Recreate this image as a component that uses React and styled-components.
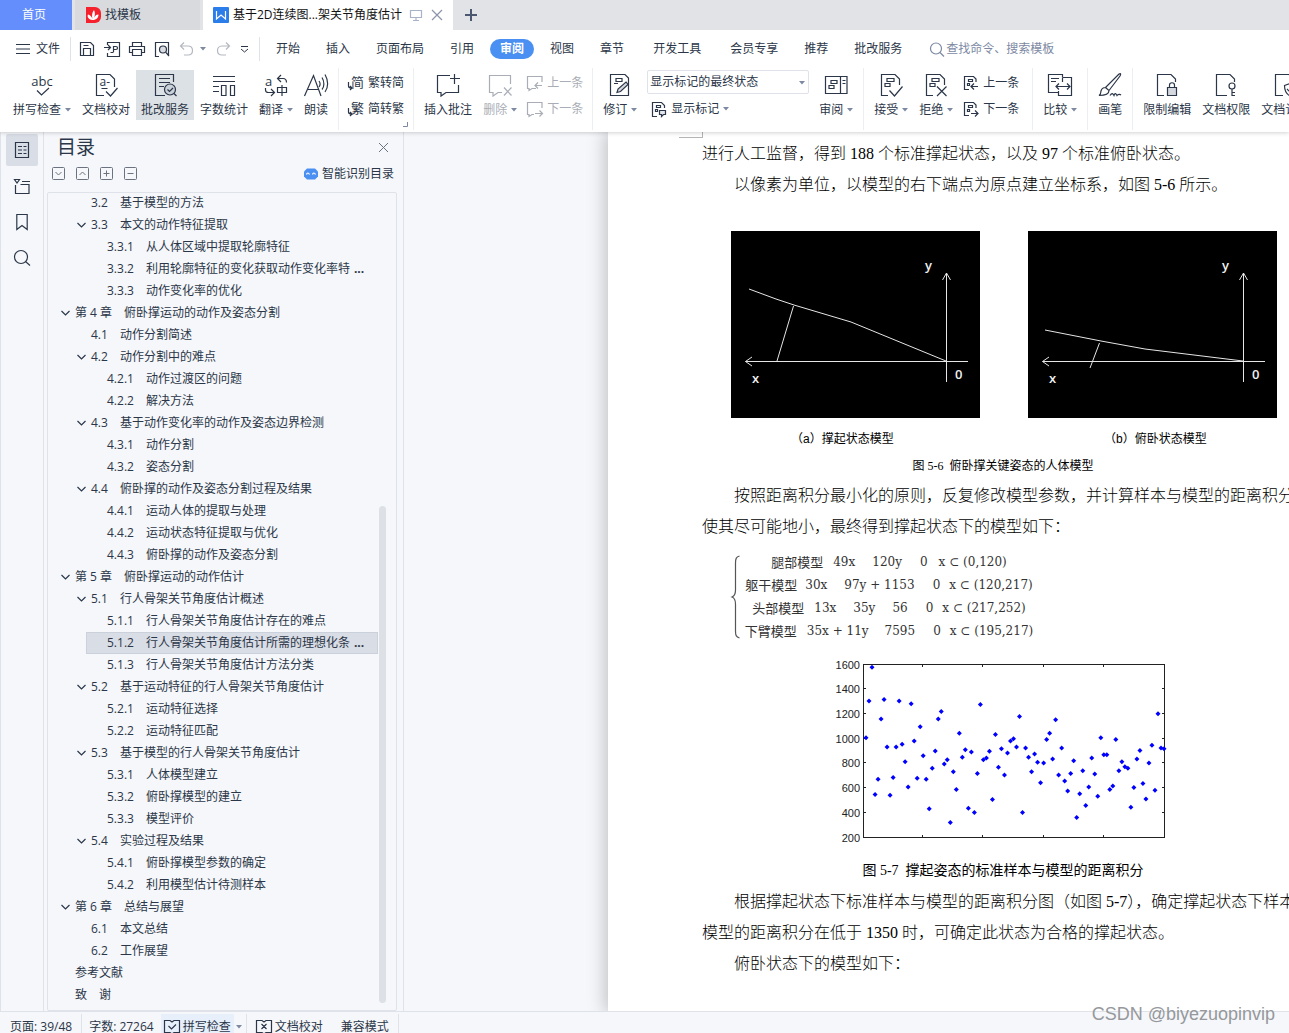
import React from "react";
import styled, { createGlobalStyle, css } from "styled-components";

const ink = "#2b3648";
const muted = "#7d89a3";
const faded = "#a9adb5";
const line = "#dfe2e8";
const panel = "#f5f7fa";

const GlobalStyle = createGlobalStyle`
  * { box-sizing: border-box; }
  body {
    margin: 0;
    overflow: hidden;
    font: 12px/20px "Open Sans", "Noto Sans CJK SC", sans-serif;
    color: ${ink};
    background: #fff;
  }
  button, input, select { font: inherit; color: inherit; }
  button { padding: 0; border: 0; background: none; white-space: nowrap; }
  ul { list-style: none; margin: 0; padding: 0; }
  svg { display: block; flex: none; overflow: visible; }
`;

const Shell = styled.div`
  position: relative;
  display: flex;
  flex-direction: column;
  height: 100vh;
  overflow: hidden;
`;

/* ---------- header ---------- */
const Header = styled.header`
  position: relative;
  z-index: 2;
  flex: none;
  background: #fff;
  box-shadow: 0 1px 4px rgba(0, 0, 0, 0.18);
`;

const TabStrip = styled.div`
  display: flex;
  gap: 3px;
  height: 30px;
  background: #e2e3e7;
`;

const FileTab = styled.button`
  display: flex;
  align-items: center;
  gap: 4px;
  width: ${(p) => p.$width}px;
  height: 30px;
  padding: 0 7px 0 10px;
  background: ${(p) => p.$bg};
  color: ${(p) => p.$color || ink};
`;

const HomeTab = styled(FileTab)`
  justify-content: center;
  padding: 0 14px 0 10px;
`;

const TabTitle = styled.span`
  flex: 1;
  text-align: left;
`;

const NewTab = styled.button`
  padding: 0 9px;
`;

const MenuRow = styled.nav`
  display: flex;
  align-items: center;
  height: 38px;
  padding: 0 16px;
`;

const FileMenu = styled.button`
  display: flex;
  align-items: center;
  gap: 6px;
  padding-right: 10px;
`;

const QuickTools = styled.div`
  display: flex;
  align-items: center;
  gap: 9px;
  height: 24px;
  padding: 0 10px 0 8px;
  border: solid ${line};
  border-width: 0 1px;
`;

const QuickPair = styled.div`
  display: flex;
  align-items: center;
  gap: 5px;
`;

const MenuTabs = styled.div`
  display: flex;
  gap: 9px;
  padding-left: 6px;
`;

const MenuGroup = styled.div`
  display: flex;
  gap: 6px;
`;

const MenuTab = styled.button`
  height: 20px;
  padding: 0 10px;
  border-radius: 10px;
  ${(p) =>
    p.$active &&
    css`
      background: #4a90f2;
      color: #fff;
      font-weight: 700;
    `}
`;

const Search = styled.label`
  display: flex;
  align-items: center;
  gap: 1px;
  padding-left: 18px;
  color: ${muted};
`;

const SearchInput = styled.input`
  width: 130px;
  padding: 0;
  border: 0;
  outline: 0;
  background: none;
  &::placeholder { color: ${muted}; opacity: 1; }
`;

const Ribbon = styled.div`
  display: flex;
  height: 64px;
  padding: 0 0 2px 3px;
  overflow: hidden;
`;

const Group = styled.div`
  position: relative;
  display: flex;
  flex: none;
  align-items: flex-start;
  gap: 1px;
  padding: 2px ${(p) => p.$end || 5}px 0 5px;
  border-right: 1px solid #eceef1;
`;

const BigButton = styled.button`
  display: flex;
  flex-direction: column;
  align-items: center;
  gap: 3px;
  height: 50px;
  padding: 3px 5px 0;
  background: ${(p) => (p.$active ? "#dce1e6" : "none")};
  color: ${(p) => (p.$off ? faded : ink)};
`;

const Caption = styled.span`
  display: flex;
  align-items: center;
  gap: 4px;
  line-height: 20px;
`;

const Stack = styled.div`
  display: flex;
  flex-direction: column;
  gap: 6px;
  padding-top: 3px;
`;

const SmallButton = styled.button`
  display: flex;
  align-items: center;
  gap: 4px;
  height: 20px;
  padding: 0 3px 0 4px;
  color: ${(p) => (p.$off ? faded : ink)};
`;

const MarkupColumn = styled.div`
  display: flex;
  flex-direction: column;
  gap: 5px;
  padding: 0 4px;
`;

const SelectBox = styled.div`
  position: relative;
  width: 162px;
`;

const MarkupSelect = styled.select`
  display: block;
  width: 100%;
  height: 24px;
  padding: 0 2px;
  appearance: none;
  border: 1px solid ${line};
  border-radius: 2px;
  background: #fff;
`;

const SelectCaret = styled.span`
  position: absolute;
  right: 4px;
  top: 11px;
  pointer-events: none;
`;

const Launcher = styled.span`
  position: absolute;
  right: 5px;
  bottom: 3px;
`;

/* ---------- body ---------- */
const Body = styled.div`
  display: flex;
  flex: 1;
  min-height: 0;
`;

const Rail = styled.nav`
  display: flex;
  flex: none;
  flex-direction: column;
  gap: 4px;
  width: 44px;
  padding: 2px 5px;
  border: solid ${line};
  border-width: 0 1px;
  background: ${panel};
`;

const RailButton = styled.button`
  display: grid;
  place-items: center;
  width: 32px;
  height: 32px;
  border-radius: 2px;
  background: ${(p) => (p.$active ? "#d9dee6" : "none")};
`;

const Outline = styled.aside`
  display: flex;
  flex: none;
  flex-direction: column;
  width: 360px;
  padding: 0 6px 0 3px;
  border-right: 1px solid ${line};
  background: ${panel};
`;

const OutlineHead = styled.div`
  display: flex;
  align-items: center;
  justify-content: space-between;
  height: 30px;
  padding: 0 8px 0 10px;
`;

const OutlineTitle = styled.h2`
  margin: 0;
  font-size: 19px;
  font-weight: 400;
  line-height: 30px;
`;

const OutlineTools = styled.div`
  display: flex;
  align-items: center;
  gap: 11px;
  height: 30px;
  padding: 0 3px 7px 5px;
`;

const SmartButton = styled.button`
  display: flex;
  align-items: center;
  gap: 4px;
  margin-left: auto;
`;

const TreeBox = styled.div`
  position: relative;
  flex: 1;
  min-height: 0;
  overflow: hidden;
  border: 1px solid ${line};
  border-radius: 2px;
`;

const Tree = styled.ul`
  margin-top: -1px;
`;

const TreeRow = styled.button`
  display: flex;
  align-items: center;
  gap: 4px;
  width: calc(100% - 18px - ${(p) => p.$level * 16 - 10}px);
  height: 22px;
  margin-left: ${(p) => p.$level * 16 - 10}px;
  padding-left: 5px;
  border: 1px solid ${(p) => (p.$active ? "#cbd1da" : "transparent")};
  background: ${(p) => (p.$active ? "#d9dde5" : "none")};
`;

const Twisty = styled.span`
  width: 11px;
`;

const Num = styled.span`
  margin-right: 8px;
`;

const Thumb = styled.div`
  position: absolute;
  right: 10px;
  top: 313px;
  bottom: 7px;
  width: 7px;
  border-radius: 4px;
  background: #dde1e5;
`;

const Canvas = styled.main`
  flex: 1;
  min-width: 0;
  padding-left: 204px;
  overflow: hidden;
  background: ${panel};
`;

const Page = styled.article`
  width: 794px;
  min-height: 100%;
  padding-left: 94px;
  background: #fff;
  box-shadow: 0 0 18px 2px rgba(0, 0, 0, 0.24);
  color: #000;
  font: 16px/31px "Liberation Serif", "Noto Sans CJK SC", serif;
`;

const CropMark = styled.div`
  width: 24px;
  height: 6px;
  margin-left: -23px;
  border: solid #b4b4b4;
  border-width: 0 1px 1px 0;
`;

const Para = styled.p`
  margin: 0;
  text-indent: ${(p) => (p.$flush ? 0 : "2em")};
  font-weight: 300;
  white-space: nowrap;
`;

const Figures = styled.div`
  display: flex;
  gap: 48px;
  padding: 31px 0 0 29px;
`;

const Figure = styled.figure`
  display: flex;
  flex-direction: column;
  gap: 7px;
  width: 249px;
  margin: 0;
`;

const FigCaption = styled.figcaption`
  font-size: 14px;
  text-align: center;
  white-space: pre;
`;

const SubCaption = styled.figcaption`
  padding-left: ${(p) => p.$left}px;
  font: 12px/28px "Liberation Sans", "Noto Sans CJK SC", sans-serif;
`;

const FigureTitle = styled.p`
  width: 602px;
  margin: 0;
  font-size: 12px;
  line-height: 27px;
  text-align: center;
  white-space: pre;
`;

const Equation = styled.div`
  display: flex;
  align-items: center;
  gap: 2px;
  padding: 9px 0 7px 29px;
`;

const Cases = styled.div`
  display: flex;
  flex-direction: column;
  width: 294px;
  color: #333;
  font: 12px/23px "DejaVu Serif", "Noto Sans CJK SC", serif;
`;

const CaseRow = styled.div`
  display: flex;
  justify-content: center;
  white-space: nowrap;
`;

const Term = styled.span`
  margin-left: ${(p) => p.$gap}px;
  font-size: ${(p) => (p.$name ? 13 : 12)}px;
`;

const ChartFigure = styled.figure`
  width: 602px;
  margin: 0;
`;

const ChartArea = styled.div`
  padding-left: 118px;
`;

/* ---------- status bar ---------- */
const Status = styled.footer`
  display: flex;
  flex: none;
  align-items: flex-start;
  height: 22px;
  padding: 2px 0 0 1px;
  border-top: 1px solid ${line};
  background: ${panel};
  overflow: hidden;
`;

const StatusItem = styled.button`
  display: flex;
  flex: none;
  align-items: center;
  gap: 3px;
  height: 26px;
  padding: 0 ${(p) => p.$padX || 9}px;
  border-right: ${(p) => (p.$rule ? `1px solid ${line}` : "0")};
  background: ${(p) => (p.$active ? "#e6effa" : "none")};
`;

const StatusCaret = styled(StatusItem)`
  padding: 0 4px 0 2px;
`;

const Watermark = styled.div`
  position: absolute;
  right: 14px;
  bottom: 7px;
  z-index: 3;
  color: #96989c;
  font: 18px/24px "Liberation Sans", sans-serif;
`;

/* ---------- drawings ---------- */
const Svg = ({ w = 24, h = 24, c = "currentColor", children }) => (
  <svg width={w} height={h} viewBox={`0 0 ${w} ${h}`} fill="none" stroke={c} strokeWidth="1.2" aria-hidden="true">
    {children}
  </svg>
);

const Caret = ({ c = muted }) => (
  <svg width="6" height="4" viewBox="0 0 6 4" aria-hidden="true">
    <path d="M0 0h6L3 3.6z" fill={c} />
  </svg>
);

const docCorner = "M9 22.5H2.5V1.5H16L20.5 6V12";
const bars = "M8 5.5h7v3H8zM6 10.5h5v3H6z";

const glyphs = {
  spell: (
    <>
      <text x="12" y="13" textAnchor="middle" fontSize="13" fill={ink} stroke="none">abc</text>
      <path d="M7 17.5l4.500 4.500L19 15" />
    </>
  ),
  proof: (
    <>
      <path d="M10 22.5H2.5V1.5H16L20.5 6V14M7.500 15.500h6" />
      <text x="5.500" y="13" fontSize="12" fill={ink} stroke="none">a-</text>
      <path d="M12 18.500l4.500 4.500 7-8" />
    </>
  ),
  review: (
    <>
      <path d="M12 22.5H2.5V1.5H20.500V9M6 5.5h11M6 9.5h11M6 13.5h5" />
      <circle cx="17" cy="16.500" r="5.500" fill="#c9d0d8" />
      <path d="M14.500 16.500l2 2 3.500-3.500M21 20.500l2.500 2.500" />
    </>
  ),
  count: <path d="M1 3.500h22M1 8.500h22M1 13.500h6M1 18.500h6M9.500 12.500h4.500v10H9.500zM18.500 12.500h4v10h-4z" />,
  translate: (
    <>
      <text x="1" y="13" fontSize="13" fill={ink} stroke="none">a</text>
      <path d="M17 2l-3.500 3.500L17 9M13.500 5.500H19c2.500 0 3.500 1.500 3.500 4M1.500 15v2c0 1.500 1 2.500 3 2.500H10M7 16l3.500 3.500L7 23M13.500 14.500h9v5h-9zM18 12v11" />
    </>
  ),
  read: <path d="M0.500 23L9.500 2.500 17 23M4 16.500h10.500M15 8c1.500 2 1.500 4 0 6M18 4.500c2.500 4 2.500 9 0 12M21 1.500c3.500 6 3.500 13 0 17.500" />,
  comment: <path d="M14 2.500H1.500v17H5V23l5-3.500h12.500V12M18.500 1v10M14 5.500h10" />,
  remove: <path d="M22.500 11V2.500H1.500v17H5V23l5-3.500h4M16 14.500l7.500 8M23.500 14.500l-7.500 8" />,
  revise: (
    <>
      <path d="M2.500 1.500H17L20.500 5V22.500H2.500zM8 5.500h6v3H8zM6 10.500h4" />
      <path d="M9 19.500l1-3.500 8-7 2 2.500-7.500 7z" fill="#d5d9df" />
    </>
  ),
  pane: <path d="M1.500 3.500h21.500v17H1.500zM16.500 3.500v17M18.500 7.500h3M18.500 10.500h3M7 7.500h6v3H7zM5 12.500h5v3H5z" />,
  accept: (
    <>
      <path d={docCorner} />
      <path d={bars} />
      <path d="M10.500 17.500l5 5.500 8-9.500" />
    </>
  ),
  reject: (
    <>
      <path d={docCorner} />
      <path d={bars} />
      <path d="M13 13.500l9.500 9.500M22.500 13.500L13 23" />
    </>
  ),
  compare: <path d="M14.500 4V1.500H0.500v18H10M3 5.500h8M3 8.500h5M14.500 4.500h9v18h-13V18M14.500 4.500V9M8 13.500h14M11 10.500l-3 3 3 3M19 10.500l3 3-3 3" />,
  brush: <path d="M7.500 14.500L21 1c2-1 2 0 1 2L11 17.500M7.500 14.500l3.500 3c0 3-3 5-10 5 2-1 1.500-2.500 2-4.500.500-2 2.500-3.500 4.500-3.500zM12 22.500c2-3 3-2 4 0 1-3 2-2 3 0 1-1.500 3-1.500 4-.5" />,
  lock: (
    <>
      <path d="M9 22.500H2.500V1.500H16L20.500 6V9" />
      <path d="M12.500 14.500h9v8h-9z" fill="#d5d9df" />
      <path d="M14.500 14.500V12c0-3 5-3 5 0v2.500" />
    </>
  ),
  key: (
    <>
      <path d="M13 22.500H2.500V1.500H16L20.500 6V9" />
      <circle cx="18" cy="13" r="3" />
      <path d="M18 16v7M18 19.500h3M18 22.500h3" />
    </>
  ),
  cert: (
    <>
      <path d="M10 22.500H2.500V1.500H16L20.500 6V9" />
      <path d="M11.500 12.500l5.500-2 5.500 2c0 5-1 8-5.500 10.500-4.500-2.500-5.500-5.500-5.500-10.500zM14 16l2.500 2.500 4-4" />
    </>
  ),
};

const small = {
  prev: <path d="M9 13.500H5L2 15.500v-2H0.500v-12h14.500V7M15 10.500H8M11 7.500l-3 3 3 3" />,
  next: <path d="M7 13.500H5L2 15.500v-2H0.500v-12h14.500V7M8 12.500h7.500M12.500 9.500l3 3-3 3" />,
  prevDoc: <path d="M6 14.500H1.500v-13H10.500l2.500 2.500V7M5.500 4.500h4v2h-4zM4.500 8.500h2v2h-2zM15 11.500H8M11 8.500l-3 3 3 3" />,
  nextDoc: <path d="M6 14.500H1.500v-13H10.500l2.500 2.500V7M5.500 4.500h4v2h-4zM4.500 8.500h2v2h-2zM8 12.500h7M12 9.500l3 3-3 3" />,
  markup: (
    <>
      <path d="M6 15.500H1.500v-14H10.500l3 3V7M5.500 4.500h4v2h-4zM4.500 8.500h2v2h-2z" />
      <path d="M8.500 9.500h6v4h-2l-2 2v-2h-2z" fill="#e3e6ea" />
    </>
  ),
  save: <path d="M1.500 1.500h10l3 3v10h-13zM4.500 14.500v-7h7v7M4.500 4.500h5" />,
  pdf: <path d="M3.500 4V1.500h12v14h-12V12M0 6.500h6M4 4l2.500 2.500L4 9M9.500 11V5.500H12c2 0 2 3 0 3H9.500M6.500 11.500h3" />,
  print: <path d="M3.500 5V1.500h9V5M3.500 11.500h-3v-6h15v6h-3M3.500 8.500h9v6h-9z" />,
  preview: (
    <>
      <path d="M5 15.500H1.500v-14h13V14" />
      <circle cx="9" cy="8.500" r="3.500" fill="#d9dce2" />
      <path d="M12 11.500l3 3.500" />
    </>
  ),
  undo: <path d="M5 1.500L1.500 5 5 8.500M1.500 5H9c6 0 6 9 0 9H5" />,
  redo: <path d="M11 1.500L14.500 5 11 8.500M14.500 5H7c-6 0-6 9 0 9h4" />,
};

const Small = ({ name, c }) => <Svg w={16} h={16} c={c}>{small[name]}</Svg>;

const Big = ({ icon, label, caret, active, off }) => (
  <BigButton $active={active} $off={off}>
    <Svg>{glyphs[icon]}</Svg>
    <Caption>
      {label}
      {caret && <Caret />}
    </Caption>
  </BigButton>
);

const Convert = ({ char }) => (
  <Svg w={16} h={16}>
    <text x="3" y="12" fontSize="13" fill={ink} stroke="none">{char}</text>
    <path d="M0.500 7v4c0 1.500 1 2 3 2M2 11l2 2-2 2" />
  </Svg>
);

const BoxIcon = ({ d }) => (
  <Svg w={13} h={13} c="#6b7380">
    <rect x="0.5" y="0.5" width="12" height="12" rx="1" strokeWidth="1" />
    <path d={d} strokeWidth="1" />
  </Svg>
);

/* ---------- data ---------- */
const outline = [
  [2, "3.2", "基于模型的方法"],
  [2, "3.3", "本文的动作特征提取", 1],
  [3, "3.3.1", "从人体区域中提取轮廓特征"],
  [3, "3.3.2", "利用轮廓特征的变化获取动作变化率特", 0, 1],
  [3, "3.3.3", "动作变化率的优化"],
  [1, "第 4 章", "俯卧撑运动的动作及姿态分割", 1],
  [2, "4.1", "动作分割简述"],
  [2, "4.2", "动作分割中的难点", 1],
  [3, "4.2.1", "动作过渡区的问题"],
  [3, "4.2.2", "解决方法"],
  [2, "4.3", "基于动作变化率的动作及姿态边界检测", 1],
  [3, "4.3.1", "动作分割"],
  [3, "4.3.2", "姿态分割"],
  [2, "4.4", "俯卧撑的动作及姿态分割过程及结果", 1],
  [3, "4.4.1", "运动人体的提取与处理"],
  [3, "4.4.2", "运动状态特征提取与优化"],
  [3, "4.4.3", "俯卧撑的动作及姿态分割"],
  [1, "第 5 章", "俯卧撑运动的动作估计", 1],
  [2, "5.1", "行人骨架关节角度估计概述", 1],
  [3, "5.1.1", "行人骨架关节角度估计存在的难点"],
  [3, "5.1.2", "行人骨架关节角度估计所需的理想化条", 0, 1],
  [3, "5.1.3", "行人骨架关节角度估计方法分类"],
  [2, "5.2", "基于运动特征的行人骨架关节角度估计", 1],
  [3, "5.2.1", "运动特征选择"],
  [3, "5.2.2", "运动特征匹配"],
  [2, "5.3", "基于模型的行人骨架关节角度估计", 1],
  [3, "5.3.1", "人体模型建立"],
  [3, "5.3.2", "俯卧撑模型的建立"],
  [3, "5.3.3", "模型评价"],
  [2, "5.4", "实验过程及结果", 1],
  [3, "5.4.1", "俯卧撑模型参数的确定"],
  [3, "5.4.2", "利用模型估计待测样本"],
  [1, "第 6 章", "总结与展望", 1],
  [2, "6.1", "本文总结"],
  [2, "6.2", "工作展望"],
  [1, "", "参考文献"],
  [1, "", "致　谢"],
];

const menuGroups = [
  ["开始", "插入", "页面布局", "引用", "审阅", "视图", "章节"],
  ["开发工具"],
  ["会员专享", "推荐", "批改服务"],
];

const cases = [
  [["腿部模型", 0], ["49x", 10], ["120y", 17], ["0", 18], ["x ⊂ (0,120)", 11]],
  [["躯干模型", 0], ["30x", 8], ["97y + 1153", 17], ["0", 18], ["x ⊂ (120,217)", 9]],
  [["头部模型", 0], ["13x", 10], ["35y", 17], ["56", 17], ["0", 18], ["x ⊂ (217,252)", 9]],
  [["下臂模型", 0], ["35x + 11y", 10], ["7595", 16], ["0", 18], ["x ⊂ (195,217)", 9]],
];

const samples = [
  1008, 1304, 1578, 547, 671, 1158, 1317, 932, 542, 685, 932, 1304, 954, 814, 609, 1282, 981, 679, 1096, 862,
  671, 432, 760, 900, 1158, 1220, 795, 830, 321, 733, 588, 1043, 849, 911, 437, 892, 402, 717, 1277, 830,
  843, 897, 507, 1034, 768, 919, 706, 884, 981, 1000, 932, 1180, 402, 924, 849, 733, 876, 808, 644, 803,
  994, 1043, 835, 1153, 706, 924, 658, 577, 717, 822, 362, 555, 741, 458, 609, 843, 714, 534, 1008, 870,
  870, 588, 617, 994, 741, 814, 773, 760, 445, 604, 835, 905, 636, 512, 803, 946, 582, 1201, 924, 919,
];

const plotY = (v) => 187.5 - ((v - 200) * 173) / 1400;
const plotX = (n) => 43 + n * 3.01;

const Chart = () => (
  <svg width="360" height="205" viewBox="0 0 360 205" role="img" aria-label="距离积分散点图">
    <rect x="43.5" y="14.5" width="301" height="173" fill="none" stroke="#222" />
    {[200, 400, 600, 800, 1000, 1200, 1400, 1600].map((v) => {
      const y = Math.round(plotY(v)) - 0.5;
      return (
        <g key={v}>
          <path d={`M43 ${y}h3M345 ${y}h-3`} stroke="#222" />
          <text x="40" y={y + 4} textAnchor="end" fontSize="11" fontFamily="Liberation Sans, sans-serif" fill="#222">{v}</text>
        </g>
      );
    })}
    {[20, 40, 60, 80].map((n) => {
      const x = Math.round(plotX(n)) - 0.5;
      return <path key={n} d={`M${x} 14v3M${x} 188v-3`} stroke="#222" />;
    })}
    {samples.map((v, i) => (
      <path key={i} d={`M${plotX(i + 1) - 2.5} ${plotY(v)}l2.500 -2.500 2.500 2.500 -2.500 2.500z`} fill="#00f" />
    ))}
  </svg>
);

const Model = ({ body, arm }) => (
  <svg width="249" height="187" viewBox="0 0 249 187" role="img" aria-label="人体模型坐标图">
    <rect width="249" height="187" fill="#000" />
    <g fill="none" stroke="#e6e6e6">
      <path d="M14.500 130.500H237M215.500 42V151M21 126l-6.500 4.500 6.500 4.500M211.500 49l4-7 4 7" />
      <path d={body} />
      <path d={arm} />
    </g>
    <g fill="#f0f0f0" fontSize="13" fontFamily="Open Sans, sans-serif" fontWeight="600">
      <text x="194" y="39">y</text>
      <text x="21" y="152">x</text>
      <text x="224" y="148">0</text>
    </g>
  </svg>
);

const StatusIcon = ({ d }) => (
  <Svg w={16} h={16}>
    <path d={`M0.500 1.500H6l2 1.500 2-1.500h5.500v12H10l-2 1.500-2-1.500H0.500z${d}`} />
  </Svg>
);

export default function App() {
  return (
    <Shell lang="zh-CN">
      <GlobalStyle />
      <Header>
        <TabStrip>
          <HomeTab $width={72} $bg="#648efc" $color="#fff">首页</HomeTab>
          <FileTab $width={125} $bg="#d8dade">
            <Svg w={16} h={16}>
              <path d="M1 0h9a6 6 0 0 1 6 6v4a6 6 0 0 1-6 6H1z" fill="#f5222d" stroke="none" />
              <path d="M7.500 13C3 12.500 2 9.500 3 7.500c2 .5 3.500 2 4.500 4.500C6.500 8.500 7 5.500 9 3c1.500 3 1 6-.5 9 1-2.500 2.500-4.500 5-4.500 0 3-2 5.500-6 5.500z" fill="#fff" stroke="none" />
            </Svg>
            <TabTitle>找模板</TabTitle>
          </FileTab>
          <FileTab $width={250} $bg="#fff" $color="#111">
            <Svg w={16} h={16}>
              <rect width="16" height="16" rx="1" fill="#2b7de9" stroke="none" />
              <path d="M3.500 4v8L8 8l4.500 4V4" stroke="#fff" />
            </Svg>
            <TabTitle>基于2D连续图...架关节角度估计</TabTitle>
            <Svg w={12} h={12} c="#a9b3c8"><path d="M0.500 1.500h11v7H0.500zM6 9v2.500M3 11.500h6" /></Svg>
            <Svg w={20} h={12} c="#8a94aa"><path d="M6 1l10 10M16 1L6 11" /></Svg>
          </FileTab>
          <NewTab aria-label="新建标签">
            <Svg w={12} h={12} c="#4c5870"><path d="M6 0v12M0 6h12" strokeWidth="2" /></Svg>
          </NewTab>
        </TabStrip>

        <MenuRow>
          <FileMenu>
            <Svg w={14} h={10}><path d="M0 0.500h14M0 5h14M0 9.500h14" strokeWidth="1" /></Svg>
            文件
          </FileMenu>
          <QuickTools>
            <Small name="save" />
            <Small name="pdf" />
            <Small name="print" />
            <Small name="preview" />
            <QuickPair>
              <Small name="undo" c="#b4b8c0" />
              <Caret />
            </QuickPair>
            <Small name="redo" c="#b4b8c0" />
            <Svg w={9} h={8}><path d="M1 1.500h7M1 4l3.500 3L8 4" strokeWidth="1" /></Svg>
          </QuickTools>
          <MenuTabs>
            {menuGroups.map((group) => (
              <MenuGroup key={group[0]}>
                {group.map((t) => (
                  <MenuTab key={t} $active={t === "审阅"}>{t}</MenuTab>
                ))}
              </MenuGroup>
            ))}
          </MenuTabs>
          <Search>
            <Svg w={15} h={15}><circle cx="6" cy="6.500" r="5.500" /><path d="M10 10.500l4 4" /></Svg>
            <SearchInput placeholder="查找命令、搜索模板" aria-label="查找命令、搜索模板" />
          </Search>
        </MenuRow>

        <Ribbon>
          <Group>
            <Big icon="spell" label="拼写检查" caret />
            <Big icon="proof" label="文档校对" />
            <Big icon="review" label="批改服务" active />
            <Big icon="count" label="字数统计" />
            <Big icon="translate" label="翻译" caret />
            <Big icon="read" label="朗读" />
          </Group>
          <Group $end={6}>
            <Stack>
              <SmallButton><Convert char="简" />繁转简</SmallButton>
              <SmallButton><Convert char="繁" />简转繁</SmallButton>
            </Stack>
            <Launcher>
              <Svg w={5} h={5} c={muted}><path d="M4.500 0v4.500H0" strokeWidth="1" /></Svg>
            </Launcher>
          </Group>
          <Group $end={6}>
            <Big icon="comment" label="插入批注" />
            <Big icon="remove" label="删除" caret off />
            <Stack>
              <SmallButton $off><Small name="prev" />上一条</SmallButton>
              <SmallButton $off><Small name="next" />下一条</SmallButton>
            </Stack>
          </Group>
          <Group>
            <Big icon="revise" label="修订" caret />
            <MarkupColumn>
              <SelectBox>
                <MarkupSelect aria-label="显示标记的最终状态">
                  <option>显示标记的最终状态</option>
                </MarkupSelect>
                <SelectCaret><Caret /></SelectCaret>
              </SelectBox>
              <SmallButton>
                <Small name="markup" />
                <Caption>显示标记<Caret /></Caption>
              </SmallButton>
            </MarkupColumn>
            <Big icon="pane" label="审阅" caret />
          </Group>
          <Group $end={10}>
            <Big icon="accept" label="接受" caret />
            <Big icon="reject" label="拒绝" caret />
            <Stack>
              <SmallButton><Small name="prevDoc" />上一条</SmallButton>
              <SmallButton><Small name="nextDoc" />下一条</SmallButton>
            </Stack>
          </Group>
          <Group><Big icon="compare" label="比较" caret /></Group>
          <Group><Big icon="brush" label="画笔" /></Group>
          <Group>
            <Big icon="lock" label="限制编辑" />
            <Big icon="key" label="文档权限" />
            <Big icon="cert" label="文档认证" />
          </Group>
        </Ribbon>
      </Header>

      <Body>
        <Rail>
          <RailButton $active aria-label="目录">
            <Svg w={16} h={18}><path d="M1.500 1.500h13v15h-13zM4 5.500h4M9.500 5.500h3M4 9h4M9.500 9h3M4 12.500h4M9.500 12.500h3" /></Svg>
          </RailButton>
          <RailButton aria-label="章节">
            <Svg w={16} h={16}><path d="M0.500 1.500h5L3 5zM8 3.500h8M1.500 7v8.500h13.500v-9H6.500" /></Svg>
          </RailButton>
          <RailButton aria-label="书签">
            <Svg w={12} h={18}><path d="M0.800 1.500h10.400v15L6 12.500 0.800 16.500z" /></Svg>
          </RailButton>
          <RailButton aria-label="查找">
            <Svg w={18} h={18}><circle cx="8" cy="8" r="6.500" /><path d="M12.500 12.500l4.500 4" /></Svg>
          </RailButton>
        </Rail>

        <Outline>
          <OutlineHead>
            <OutlineTitle>目录</OutlineTitle>
            <button aria-label="关闭">
              <Svg w={11} h={11} c="#6b7380"><path d="M1 1l9 9M10 1l-9 9" strokeWidth="1" /></Svg>
            </button>
          </OutlineHead>
          <OutlineTools>
            <button aria-label="展开"><BoxIcon d="M3.500 5l3 3 3-3" /></button>
            <button aria-label="收起"><BoxIcon d="M3.500 8l3-3 3 3" /></button>
            <button aria-label="增加"><BoxIcon d="M3.500 6.500h6M6.500 3.500v6" /></button>
            <button aria-label="减少"><BoxIcon d="M3.500 6.500h6" /></button>
            <SmartButton>
              <Svg w={14} h={14}>
                <path d="M3 1.500h8l3 3v5l-3 3H3l-3-3v-5z" fill="#4a90f2" stroke="none" />
                <path d="M2.500 7.500c.500-2 2-2 3 0M8.500 7.500c.500-2 2-2 3 0" stroke="#fff" />
              </Svg>
              智能识别目录
            </SmartButton>
          </OutlineTools>
          <TreeBox>
            <Tree>
              {outline.map(([level, num, name, open, more]) => (
                <li key={num + name}>
                  <TreeRow $level={level} $active={num === "5.1.2"}>
                    <Twisty>
                      {open ? <Svg w={11} h={8}><path d="M1.500 2l4 4 4-4" /></Svg> : null}
                    </Twisty>
                    {num && <Num>{num}</Num>}
                    <span>{name}</span>
                    {more ? <b>...</b> : null}
                  </TreeRow>
                </li>
              ))}
            </Tree>
            <Thumb />
          </TreeBox>
        </Outline>

        <Canvas>
          <Page>
            <CropMark />
            <Para $flush>进行人工监督，得到 188 个标准撑起状态，以及 97 个标准俯卧状态。</Para>
            <Para>以像素为单位，以模型的右下端点为原点建立坐标系，如图 5-6 所示。</Para>
            <Figures>
              <Figure>
                <Model body="M18 58L45 68 63 74 120 91 215 130" arm="M62.500 75L46 130" />
                <SubCaption $left={60}>（a）撑起状态模型</SubCaption>
              </Figure>
              <Figure>
                <Model body="M17 99L73 110 117 118 215 130" arm="M71.500 112L62 137" />
                <SubCaption $left={76}>（b）俯卧状态模型</SubCaption>
              </Figure>
            </Figures>
            <FigureTitle>{"图 5-6  俯卧撑关键姿态的人体模型"}</FigureTitle>
            <Para>按照距离积分最小化的原则，反复修改模型参数，并计算样本与模型的距离积分</Para>
            <Para $flush>使其尽可能地小，最终得到撑起状态下的模型如下：</Para>
            <Equation>
              <Svg w={9} h={86} c="#555">
                <path d="M8.500 2C5 3 4.500 5 4.500 9V36c0 4-1 6-3.500 7 2.500 1 3.500 3 3.500 7V77c0 4 .5 6 4 7" />
              </Svg>
              <Cases>
                {cases.map((row) => (
                  <CaseRow key={row[0][0]}>
                    {row.map(([t, gap], i) => (
                      <Term key={t} $gap={gap} $name={i === 0}>{t}</Term>
                    ))}
                  </CaseRow>
                ))}
              </Cases>
            </Equation>
            <ChartFigure>
              <ChartArea><Chart /></ChartArea>
              <FigCaption>{"图 5-7  撑起姿态的标准样本与模型的距离积分"}</FigCaption>
            </ChartFigure>
            <Para>根据撑起状态下标准样本与模型的距离积分图（如图 5-7），确定撑起状态下样本</Para>
            <Para $flush>模型的距离积分在低于 1350 时，可确定此状态为合格的撑起状态。</Para>
            <Para>俯卧状态下的模型如下：</Para>
          </Page>
        </Canvas>
      </Body>

      <Status>
        <StatusItem $rule>页面: 39/48</StatusItem>
        <StatusItem $padX={7}>字数: 27264</StatusItem>
        <StatusItem $padX={3} $active>
          <StatusIcon d="M4.500 7l3 3 4.500-4.500" />
          拼写检查
        </StatusItem>
        <StatusCaret $rule aria-label="更多"><Caret /></StatusCaret>
        <StatusItem>
          <StatusIcon d="M5.500 5l5 5M10.500 5l-5 5" />
          文档校对
        </StatusItem>
        <StatusItem $rule>兼容模式</StatusItem>
      </Status>
      <Watermark>CSDN @biyezuopinvip</Watermark>
    </Shell>
  );
}
